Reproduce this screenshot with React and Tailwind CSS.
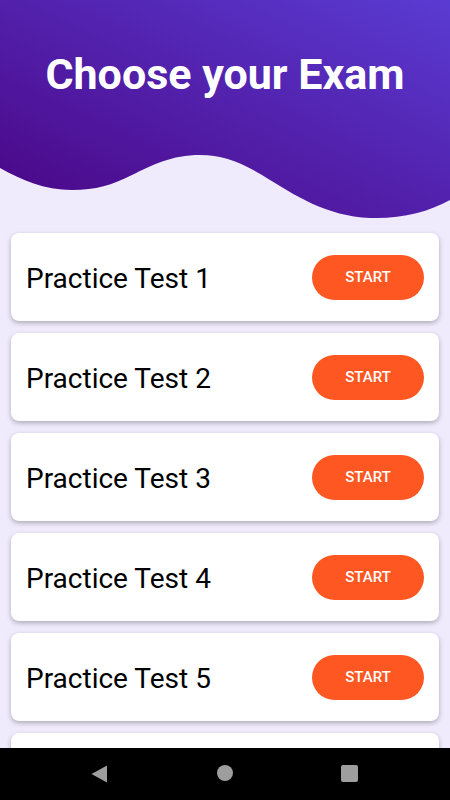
import React from "react";

const tests = [1, 2, 3, 4, 5, 6];

function Wave() {
  return (
    <svg
      className="absolute inset-0 w-full h-full"
      viewBox="0 0 450 221"
      preserveAspectRatio="none"
    >
      <defs>
        <linearGradient id="hdr" x1="0" y1="1" x2="1" y2="0">
          <stop offset="0" stopColor="#4a0584" />
          <stop offset="1" stopColor="#5a3bd2" />
        </linearGradient>
      </defs>
      <path
        d="M0 0 H450 V200 C428 212 402 219 370 218 C326 216 296 196 262 175 C238 161 222 155 200 155 C172 155 152 165 132 175 C112 185 96 190 72 190 C44 190 22 180 0 168 Z"
        fill="url(#hdr)"
      />
    </svg>
  );
}

export default function App() {
  return (
    <div
      className="relative w-[450px] h-[800px] overflow-hidden bg-[#efebfc]"
      style={{ fontFamily: "Roboto, 'Liberation Sans', sans-serif" }}
    >
      <div className="relative h-[221px]">
        <Wave />
        <h1 className="relative pt-[49px] text-center text-white font-bold text-[43px] leading-[50px]">
          Choose your Exam
        </h1>
      </div>

      <div className="flex flex-col gap-3 pt-3 px-[11px]">
        {tests.map((n) => (
          <div
            key={n}
            className="flex items-center justify-between h-[88px] shrink-0 bg-white rounded-lg shadow-[0_2px_5px_rgba(0,0,0,0.28)] pl-[15px] pr-[15px]"
          >
            <span className="pt-1 text-[28px] text-black">Practice Test {n}</span>
            <button className="w-[112px] h-[45px] rounded-full bg-[#ff5722] text-white text-[15px] font-medium">
              START
            </button>
          </div>
        ))}
      </div>

      <div className="absolute bottom-0 left-0 right-0 h-[52px] bg-black">
        <div className="relative w-[450px] h-[52px]">
          <svg width="17" height="18" viewBox="0 0 17 18" className="absolute left-[91px] top-[17px]">
            <path d="M16 0.5 V17.5 L0.5 9 Z" fill="#9e9e9e" />
          </svg>
          <div className="absolute left-[217px] top-[17px] w-4 h-4 rounded-full bg-[#9e9e9e]" />
          <div className="absolute left-[341px] top-[17px] w-[17px] h-[17px] rounded-[2px] bg-[#9e9e9e]" />
        </div>
      </div>
    </div>
  );
}
